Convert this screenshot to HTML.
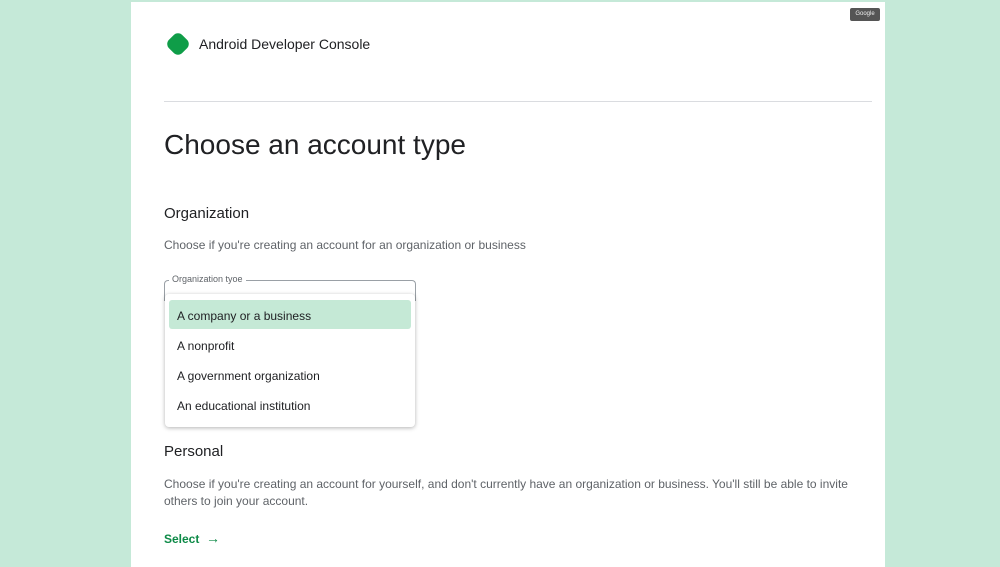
<!DOCTYPE html>
<html><head><style>
body{margin:0;width:1000px;height:567px;background:#c5e9d8;font-family:"Liberation Sans",sans-serif;position:relative;overflow:hidden}
.page{position:absolute;left:131px;top:2px;width:754px;height:565px;background:#fff}
.a{position:absolute;white-space:nowrap}
</style></head><body>
<div class="page"></div>
<div class="a" style="left:850px;top:8px;width:30px;height:13px;background:#555;border-radius:2px;color:#eee;font-size:6px;line-height:13px;text-align:center">Google</div>
<div class="a" style="left:167px;top:33px;width:22px;height:22px;background:#0f9d48;border-radius:7px;transform:rotate(45deg) scale(.85)"></div>
<div class="a" style="left:199px;top:36px;font-size:14px;color:#202124">Android Developer Console</div>
<div class="a" style="left:164px;top:101px;width:708px;height:1px;background:#dadce0"></div>
<div class="a" style="left:164px;top:129px;font-size:28px;color:#202124">Choose an account type</div>
<div class="a" style="left:164px;top:205px;font-size:15px;color:#202124">Organization</div>
<div class="a" style="left:164px;top:238px;font-size:12px;color:#5f6368">Choose if you're creating an account for an organization or business</div>
<div class="a" style="left:164px;top:280px;width:250px;height:20px;border:1px solid #9aa0a6;border-bottom:none;border-radius:4px 4px 0 0"></div>
<div class="a" style="left:169px;top:274px;padding:0 3px;background:#fff;font-size:9px;color:#5f6368">Organization tyoe</div>
<div class="a" style="left:165px;top:294px;width:250px;height:133px;background:#fff;border-radius:4px;box-shadow:0 1px 4px rgba(0,0,0,.3)"></div>
<div class="a" style="left:169px;top:300px;width:242px;height:29px;background:#c5e9d6;border-radius:3px"></div>
<div class="a" style="left:177px;top:309px;font-size:12px;color:#202124">A company or a business</div>
<div class="a" style="left:177px;top:339px;font-size:12px;color:#202124">A nonprofit</div>
<div class="a" style="left:177px;top:369px;font-size:12px;color:#202124">A government organization</div>
<div class="a" style="left:177px;top:399px;font-size:12px;color:#202124">An educational institution</div>
<div class="a" style="left:164px;top:443px;font-size:15px;color:#202124">Personal</div>
<div class="a" style="left:164px;top:476px;font-size:12px;color:#5f6368;line-height:17px">Choose if you're creating an account for yourself, and don't currently have an organization or business. You'll still be able to invite<br>others to join your account.</div>
<div class="a" style="left:164px;top:530px;font-size:12px;color:#0d8a47;font-weight:bold">Select &nbsp;<span style="font-size:14px">→</span></div>
</body></html>
